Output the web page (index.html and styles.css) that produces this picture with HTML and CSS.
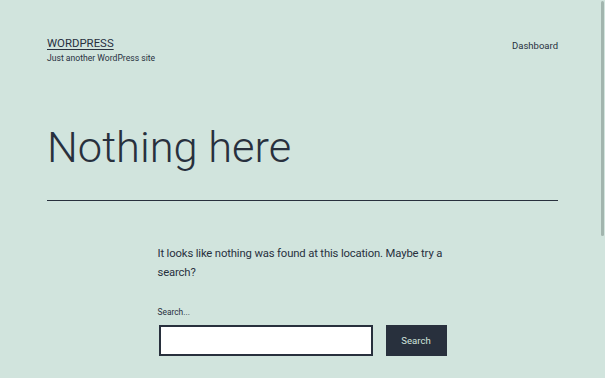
FILE: index.html
```html
<!DOCTYPE html>
<html>
<head>
  <title>Page not found – WordPress</title>
  <link rel="stylesheet" href="styles.css">
</head>
<body>
  <div class="site">
    <header class="site-header">
      <div class="site-branding">
        <p class="site-title"><a href="#">WORDPRESS</a></p>
        <p class="site-description">Just another WordPress site</p>
      </div>
      <nav class="site-nav">
        <a href="#">Dashboard</a>
      </nav>
    </header>

    <div class="page-header">
      <h1 class="page-title">Nothing here</h1>
    </div>

    <div class="page-content">
      <p>It looks like nothing was found at this location. Maybe try a search?</p>
      <form class="search-form">
        <label class="search-label" for="s">Search...</label>
        <div class="search-row">
          <input type="search" id="s" class="search-field">
          <button type="button" class="search-submit">Search</button>
        </div>
      </form>
    </div>
  </div>
  <div class="scroll-thumb"></div>
</body>
</html>
```

FILE: styles.css
```css
:root {
  --color-bg: #d1e4dd;
  --color-text: #28303d;
  --color-dark: #28303d;
  --font-family: Roboto, "Liberation Sans", Arial, sans-serif;
}

html, body {
  height: 100%;
  overflow: hidden;
}

body {
  margin: 0;
  background-color: var(--color-bg);
  color: var(--color-text);
  font-family: var(--font-family);
}

.site {
  padding: 0 47px;
}

.site-header {
  display: flex;
  justify-content: space-between;
  align-items: flex-start;
  padding-top: 36.4px;
}

.site-title {
  margin: 0;
  font-size: 11.4px;
  line-height: 14px;
}

.site-title a {
  color: var(--color-text);
  text-decoration: underline;
  text-underline-offset: 2px;
  text-decoration-thickness: 1px;
}

.site-description {
  margin: 1.3px 0 0;
  font-size: 8.6px;
  line-height: 12px;
}

.site-nav {
  padding-top: 2.85px;
  font-size: 9.5px;
  line-height: 13px;
}

.site-nav a {
  color: var(--color-text);
  text-decoration: none;
}

.page-header {
  margin-top: 60.45px;
  border-bottom: 1.5px solid var(--color-dark);
  padding-bottom: 27.5px;
}

.page-title {
  margin: 0;
  font-size: 43.4px;
  font-weight: 300;
  line-height: 48px;
}

.page-content {
  width: 290px;
  margin: 42.9px auto 0;
}

.page-content p {
  margin: 0;
  font-size: 11.3px;
  letter-spacing: -0.15px;
  line-height: 19px;
}

.search-form {
  margin-top: 25.6px;
}

.search-label {
  display: block;
  font-size: 8.4px;
  line-height: 11px;
  margin-bottom: 6.4px;
}

.search-row {
  display: flex;
  gap: 13px;
  padding-left: 1px;
}

.search-field {
  width: 214px;
  height: 31px;
  box-sizing: border-box;
  border: 2px solid var(--color-dark);
  background: #fff;
  margin: 0;
  padding: 0 8px;
  border-radius: 0;
}

.search-submit {
  width: 61px;
  height: 31px;
  border: 0;
  border-radius: 0;
  background-color: var(--color-dark);
  color: #d1e4dd;
  font-family: var(--font-family);
  font-size: 9.6px;
  padding: 0;
}

/* overlay scrollbar thumb */
.scroll-thumb {
  position: fixed;
  top: 1px;
  right: 1px;
  width: 3px;
  height: 235px;
  background-color: #a2b5ae;
  border-radius: 2px;
}
```
